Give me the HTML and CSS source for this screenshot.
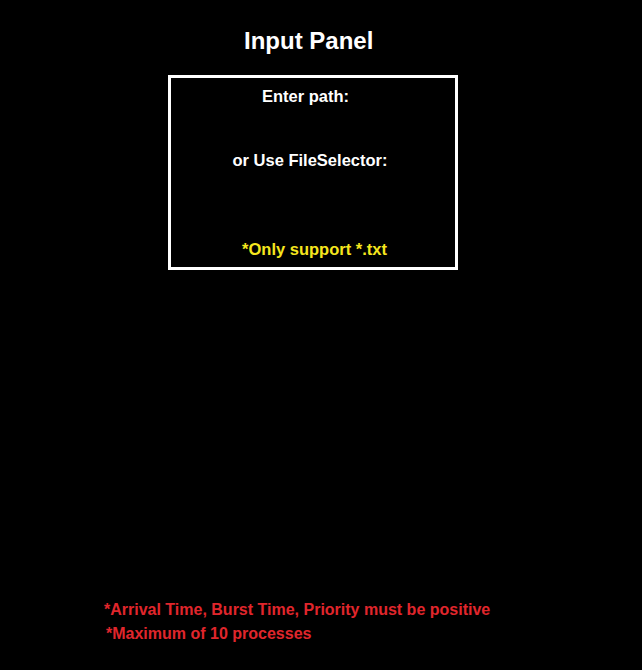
FILE: index.html
```html
<!DOCTYPE html>
<html>
<head>
<meta charset="utf-8">
<link rel="stylesheet" href="styles.css">
</head>
<body>
<div class="page">
  <h1 class="title">Input Panel</h1>
  <div class="panel">
    <div class="label l1">Enter path:</div>
    <div class="label l2">or Use FileSelector:</div>
    <div class="label l3 note">*Only support *.txt</div>
  </div>
  <div class="rules">
    <div class="rule r1">*Arrival Time, Burst Time, Priority must be positive</div>
    <div class="rule r2">*Maximum of 10 processes</div>
  </div>
</div>
</body>
</html>
```
FILE: styles.css
```css
html, body {
  margin: 0;
  padding: 0;
  background: #000;
  width: 642px;
  height: 670px;
  overflow: hidden;
}
.page {
  display: flex;
  flex-direction: column;
  font-family: "Liberation Sans", Arial, sans-serif;
  font-weight: bold;
  color: #fff;
  height: 670px;
}
.title {
  margin: 0;
  padding-top: 27px;
  padding-left: 244px;
  font-size: 24px;
  line-height: 28px;
  font-weight: bold;
}
.panel {
  margin-top: 20px;
  margin-left: 168px;
  width: 290px;
  height: 195px;
  box-sizing: border-box;
  border: 3px solid #fff;
  padding-top: 8px;
  display: flex;
  flex-direction: column;
}
.label {
  font-size: 16.5px;
  line-height: 20px;
  text-align: center;
}
.l1 { padding-right: 15px; }
.l2 { margin-top: 44px; padding-right: 6px; }
.l3 { margin-top: 69px; padding-left: 3px; }
.note { color: #f5e61e; }
.rules {
  margin-top: 330px;
  padding-left: 104px;
  display: flex;
  flex-direction: column;
  gap: 4px;
}
.rule {
  color: #e0262c;
  font-size: 16px;
  line-height: 20px;
}
.r2 { padding-left: 2px; }
```
